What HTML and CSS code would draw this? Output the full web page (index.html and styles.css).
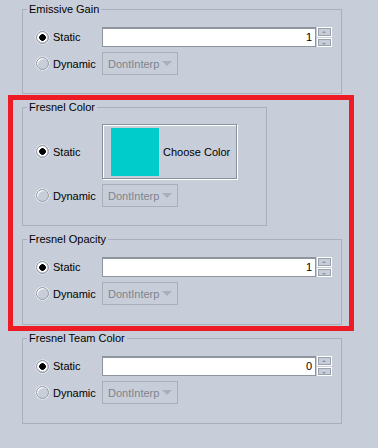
FILE: index.html
```
<!DOCTYPE html>
<html lang="en">

<head>
    <meta charset="UTF-8">
    <meta name="viewport" content="width=device-width, initial-scale=1.0">
    <title>Fresnel</title>

    <link rel="stylesheet" href="styles.css">
</head>

<body>
    <main class="panel">
        <section class="group">
            <div class="group-title">Emissive Gain</div>
            <div class="rows">
                <label class="option"><span class="radio on"></span>Static</label>
                <div class="number">
                    <div class="field">1</div>
                    <div class="spin"><span class="up"></span><span class="down"></span></div>
                </div>
                <label class="option"><span class="radio"></span>Dynamic</label>
                <div class="select">DontInterp<span class="arrow"></span></div>
            </div>
        </section>

        <section class="group narrow">
            <div class="group-title">Fresnel Color</div>
            <div class="rows color-rows">
                <label class="option"><span class="radio on"></span>Static</label>
                <div class="color-btn"><span class="swatch"></span>Choose Color</div>
                <label class="option"><span class="radio"></span>Dynamic</label>
                <div class="select">DontInterp<span class="arrow"></span></div>
            </div>
        </section>

        <section class="group tall">
            <div class="group-title">Fresnel Opacity</div>
            <div class="rows">
                <label class="option"><span class="radio on"></span>Static</label>
                <div class="number">
                    <div class="field">1</div>
                    <div class="spin"><span class="up"></span><span class="down"></span></div>
                </div>
                <label class="option"><span class="radio"></span>Dynamic</label>
                <div class="select">DontInterp<span class="arrow"></span></div>
            </div>
        </section>

        <section class="group tall">
            <div class="group-title">Fresnel Team Color</div>
            <div class="rows">
                <label class="option"><span class="radio on"></span>Static</label>
                <div class="number">
                    <div class="field">0</div>
                    <div class="spin"><span class="up"></span><span class="down"></span></div>
                </div>
                <label class="option"><span class="radio"></span>Dynamic</label>
                <div class="select">DontInterp<span class="arrow"></span></div>
            </div>
        </section>

        <div class="highlight"></div>
    </main>
</body>

</html>
```

FILE: styles.css
```
* {
    padding: 0;
    margin: 0;
    box-sizing: border-box;
    font-family: "Liberation Sans", Arial, sans-serif;
}

body {
    background-color: #c8ced9;
    font-size: 11px;
    color: #000;
    height: 448px;
    overflow: hidden;
}

.panel {
    position: relative;
    display: flex;
    flex-direction: column;
    gap: 13px;
    padding: 9px 0 0 22px;
}

.group {
    width: 320px;
    border: 1px solid #a9b0bb;
}

.group.narrow {
    width: 245px;
}

.group-title {
    width: fit-content;
    margin: -7px 0 0 4px;
    padding: 0 2px;
    line-height: 13px;
    background-color: #c8ced9;
}

.rows {
    display: grid;
    grid-template-columns: 66px auto;
    justify-content: start;
    align-items: center;
    row-gap: 5px;
    padding: 11px 0 18px 13px;
}

.tall .rows {
    padding-bottom: 19px;
}

.color-rows {
    padding-top: 10px;
}

.option {
    display: flex;
    align-items: center;
    gap: 4px;
}

.radio {
    width: 13px;
    height: 13px;
    border-radius: 50%;
    border: 1px solid #8f96a1;
    background-color: #c8ced9;
    box-shadow: inset 1px 1px 0 #fff, 0 0 0 0.5px #fff;
}

.radio.on {
    background: radial-gradient(circle, #000 0 3px, #fff 3.6px 4.6px, #c8ced9 5px);
}

.number {
    display: flex;
    align-items: stretch;
}

.field {
    width: 214px;
    height: 20px;
    background-color: #fff;
    border: 1px solid #8e959f;
    border-top-width: 2px;
    text-align: right;
    padding-right: 3px;
    line-height: 17px;
}

.spin {
    display: flex;
    flex-direction: column;
    gap: 1px;
    margin-left: 1px;
    height: 20px;
}

.spin>span {
    position: relative;
    width: 15px;
    flex: 1;
    border: 1px solid #fff;
    box-shadow: inset 0 0 0 1px #9aa1ab;
}

.spin>span::after {
    content: "";
    position: absolute;
    left: 4px;
    top: 3px;
    border: 2.5px solid transparent;
}

.spin>.up::after {
    top: 1px;
    border-bottom-color: #8f96a1;
}

.spin>.down::after {
    top: 4px;
    border-top-color: #8f96a1;
}

.select {
    display: flex;
    align-items: center;
    justify-content: space-between;
    width: 76px;
    height: 23px;
    border: 1px solid #a9afba;
    padding: 0 5px 0 5px;
    color: #7e848e;
}

.select>.arrow {
    width: 0;
    height: 0;
    border-left: 5px solid transparent;
    border-right: 5px solid transparent;
    border-top: 5px solid #aab0ba;
}

.color-btn {
    display: flex;
    align-items: center;
    gap: 4px;
    width: 135px;
    height: 55px;
    border: 1px solid #8a9099;
    box-shadow: inset 1px 1px 0 #fff, 1px 1px 0 #fff;
    padding-left: 8px;
}

.swatch {
    width: 48px;
    height: 48px;
    background-color: #00cccc;
}

.highlight {
    position: absolute;
    left: 8px;
    top: 95px;
    width: 346px;
    height: 236px;
    border: 5px solid #ed1c24;
}
```
